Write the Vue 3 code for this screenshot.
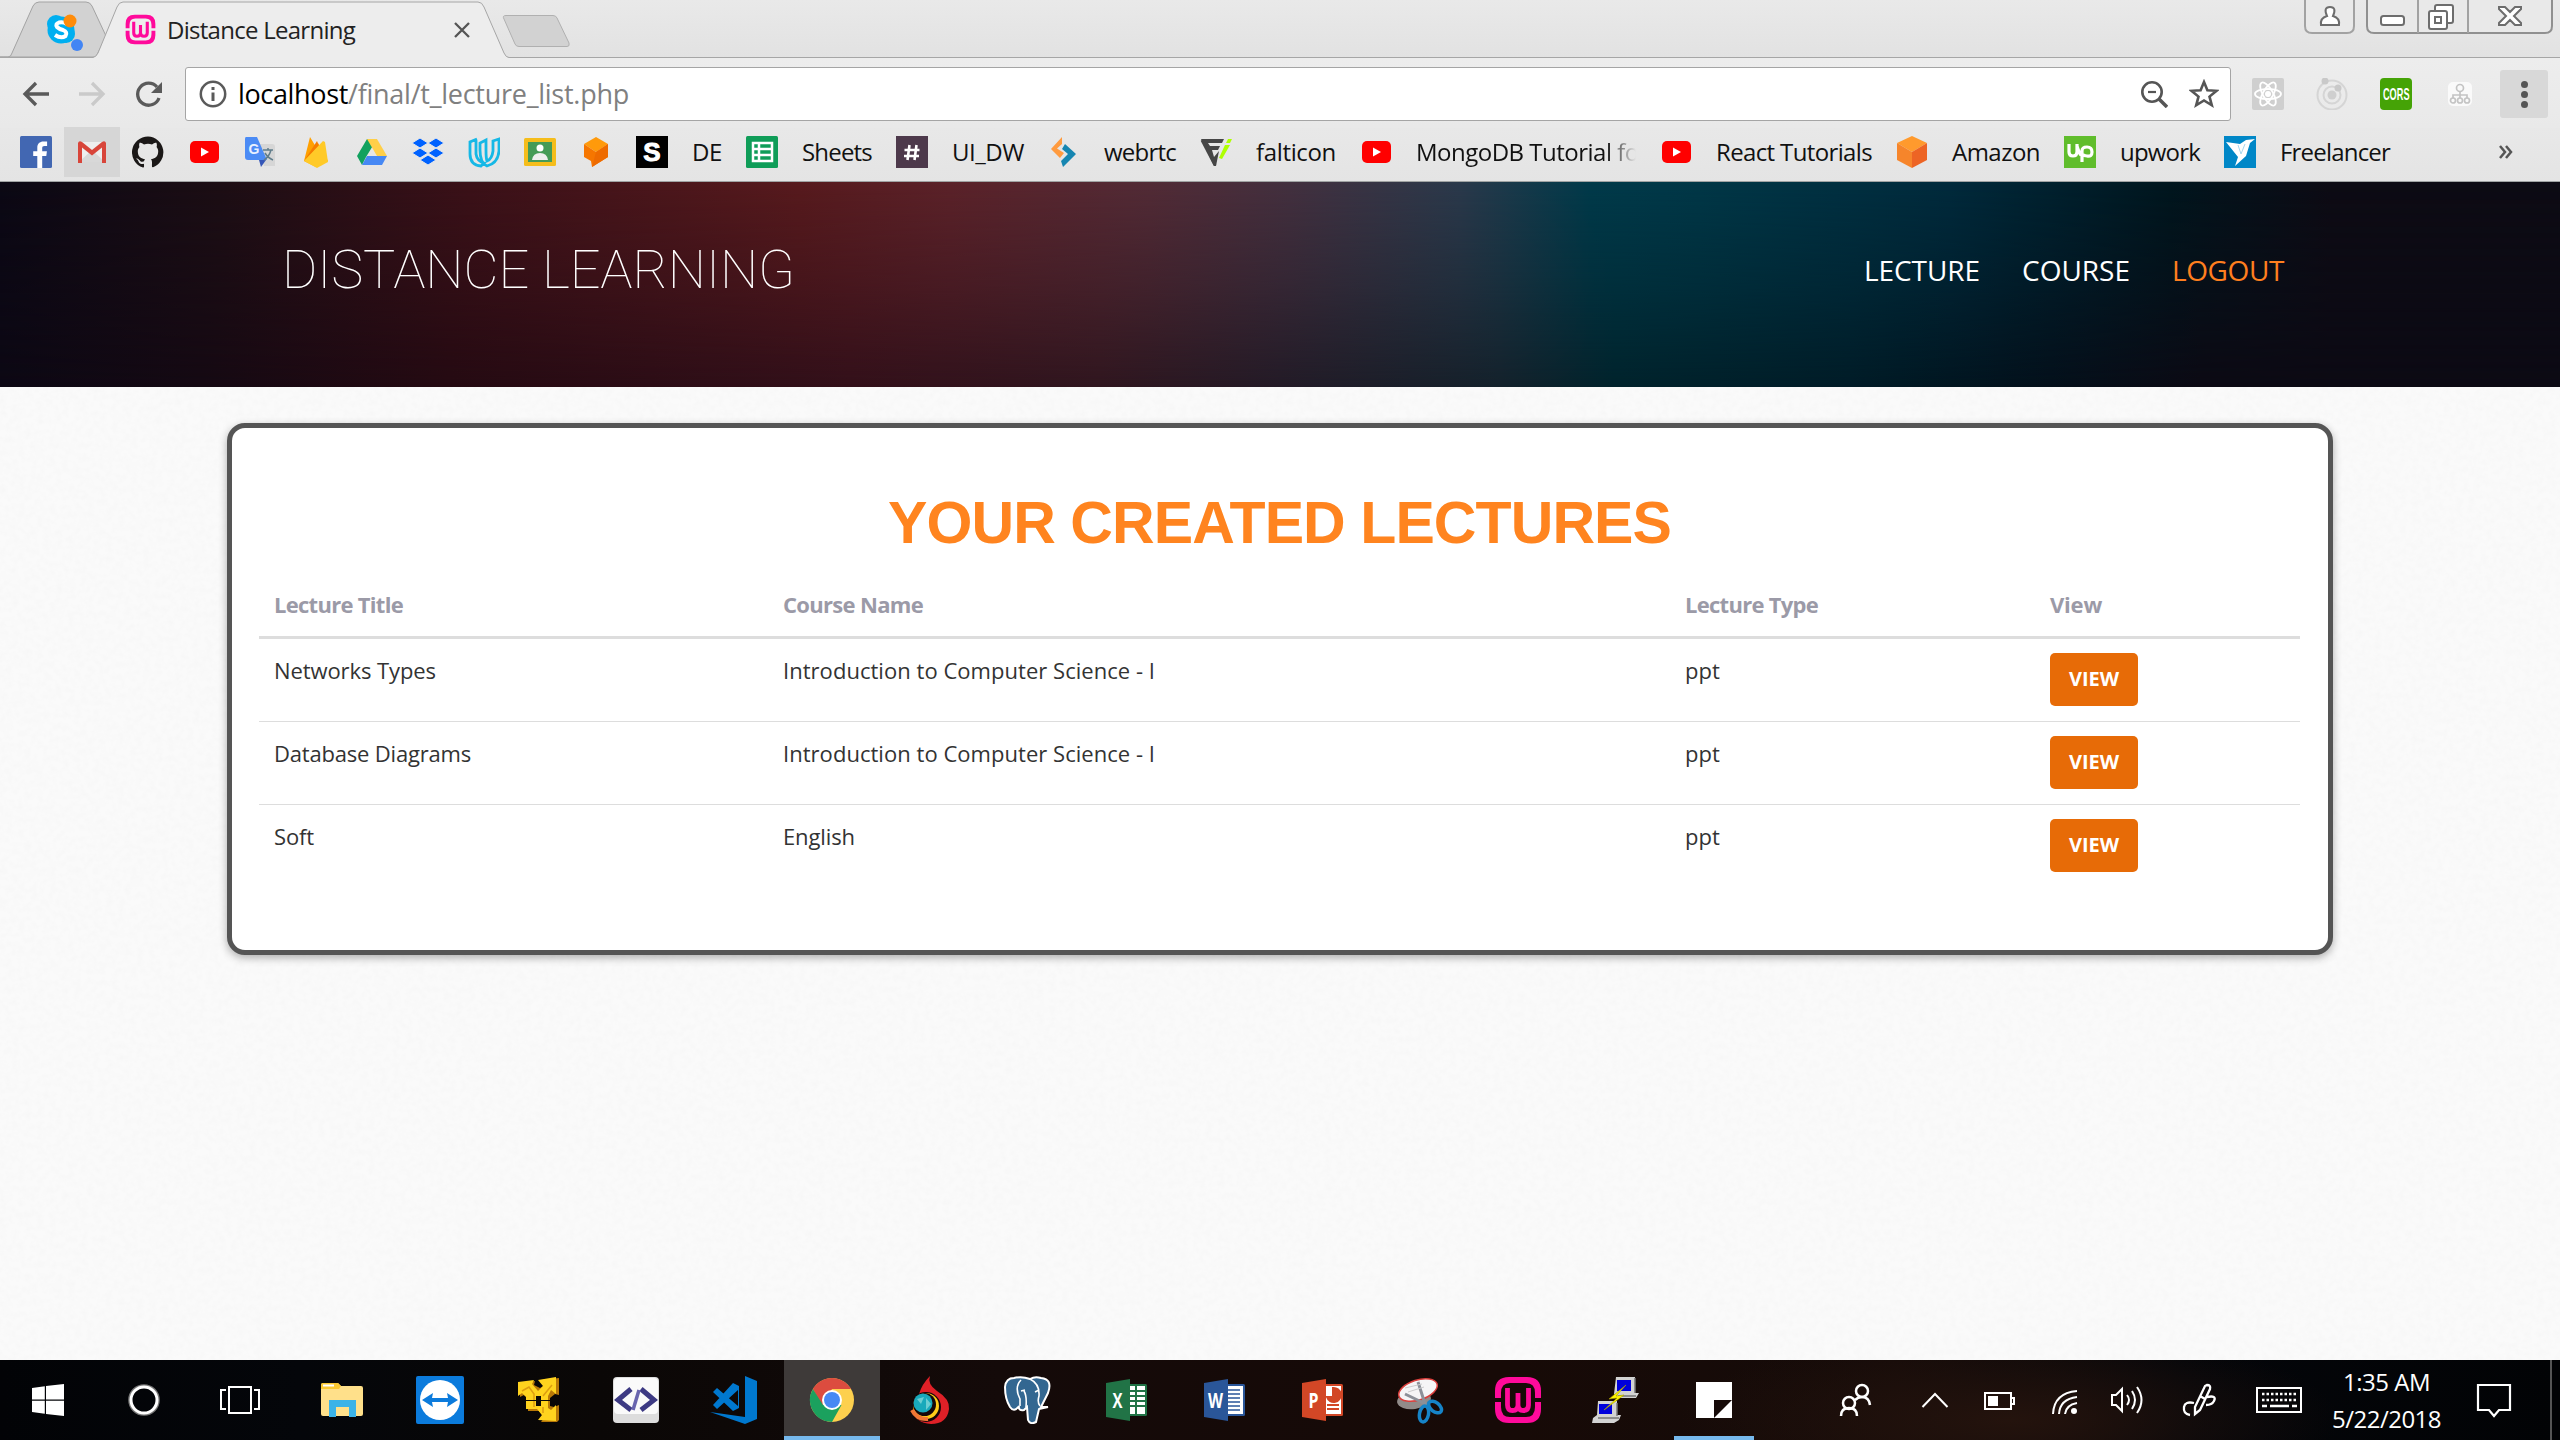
<script setup>
import { nextTick } from 'vue'

// Tracks a label so that it takes the given advance width.
const vFit = {
  mounted(el, binding) {
    nextTick(() => {
      const natural = el.getBoundingClientRect().width
      el.style.letterSpacing = (binding.value - natural) / el.textContent.length + 'px'
    })
  },
}

const youtube = '<rect x="2" y="5" width="29" height="22" rx="5" fill="#f00"/><path d="M13 11.500L21 16L13 20.500Z" fill="#fff"/>'
const wamp = '<path d="M1 22V15Q1 1 15 1H33Q47 1 47 15V22H41V17Q41 7 32 7H16Q7 7 7 17V22ZM1 26H7V31Q7 41 16 41H32Q41 41 41 31V26H47V33Q47 47 33 47H15Q1 47 1 33Z" fill="#ff0a9b"/><path d="M13.500 12V29Q13.500 34.500 18.500 34.500Q24 34.500 24 29V17M24 29Q24 34.500 29.500 34.500Q34.500 34.500 34.500 29V12" fill="none" stroke="#ff0a9b" stroke-width="4.800"/>'

const bookmarks = [
  { art: '<rect width="32" height="32" rx="1.500" fill="#4267b2"/><path d="M22.200 32V20h4.100l.6-4.800h-4.700v-3c0-1.400.4-2.300 2.400-2.300h2.500V5.600c-.4-.1-1.900-.2-3.700-.2-3.600 0-6.100 2.200-6.100 6.300v3.500h-4.100V20h4.100v12z" fill="#fff"/>' },
  { art: '<rect x="3" y="6" width="26" height="20" fill="#eee"/><path d="M3 26L16 14L29 26Z" fill="#d8d8d8"/><path d="M2 7Q3 4 6 6L16 14L26 6Q29 4 30 7V27H26V11.500L16 19.500L6 11.500V27H2Z" fill="#d8453a"/>', active: true },
  { art: '<path transform="scale(2)" d="M8 .2a8 8 0 0 0-2.530 15.590c.4.070.55-.17.55-.38l-.01-1.490c-2.230.48-2.700-1.070-2.700-1.070-.36-.92-.89-1.170-.89-1.170-.73-.5.050-.49.050-.49.800.060 1.230.83 1.230.83.720 1.220 1.870.87 2.330.66.070-.52.280-.87.510-1.070-1.780-.2-3.640-.89-3.640-3.950 0-.87.310-1.590.82-2.150-.08-.2-.36-1.020.08-2.120 0 0 .67-.21 2.200.82a7.600 7.600 0 0 1 4 0c1.530-1.040 2.200-.82 2.200-.82.440 1.100.16 1.920.08 2.120.510.56.82 1.270.82 2.150 0 3.070-1.870 3.750-3.650 3.950.29.250.54.730.54 1.480l-.01 2.200c0 .21.150.46.55.38A8 8 0 0 0 8 .2z" fill="#1b1817"/>' },
  { art: youtube },
  { art: '<path d="M12 8H28Q31 8 31 11V30H20Z" fill="#d6d6d6"/><path d="M2 1H13L23 24H4Q1 24 1 21V3Q1 1 2 1Z" fill="#4b8bf5"/><path d="M15 24H22L17 31Z" fill="#3556b8"/><text x="4.500" y="18" font-family="Liberation Sans" font-size="14" font-weight="bold" fill="#e8f0ff">G</text><path d="M19 14H29M24 12V14M27 14Q25 21 20 24M21 17Q24 22 29 24" fill="none" stroke="#607d8b" stroke-width="1.500"/>' },
  { art: '<path d="M4 25L10 1L16 11L18 7L28 25L16 31Z" fill="#ffa000"/><path d="M4 25L17 5L19 10Z" fill="#f57c00"/><path d="M4 25L23 5L25 6L28 26L17 32Z" fill="#ffca28"/>' },
  { art: '<path d="M11 3H21L10 21L6 29L1 20Z" fill="#11a15f"/><path d="M11 3H21L31 20H21Z" fill="#ffcf48"/><path d="M11 20H31L26 29H6Z" fill="#4688f4"/>' },
  { art: '<path d="M8 2L16 7L8 12L0 7ZM24 2L32 7L24 12L16 7ZM8 12L16 17L8 22L0 17ZM24 12L32 17L24 22L16 17ZM16 19L24 24L16 29L8 24Z" fill="#0062ff" stroke="#e7e7e7" stroke-width="1"/>' },
  { art: '<path d="M9 3L2 6V18Q2 29 13 30L16 27Q9 25 8 18V4M18 4L12 7V14Q12 27 19 30Q30 27 31 15V3L25 5V15Q24 23 19 25Q18 22 18 14Z" fill="none" stroke="#16b8e6" stroke-width="2.800"/>' },
  { art: '<rect y="2" width="32" height="28" rx="1.500" fill="#f5bd1b"/><rect x="4" y="6" width="24" height="20" fill="#459b57"/><circle cx="16" cy="12" r="3.500" fill="#fff"/><path d="M8 24Q9 17 16 17T24 24Z" fill="#eee"/>' },
  { art: '<path d="M16 1L28 8L16 16L4 8Z" fill="#ff9a0b"/><path d="M4 8L16 16L28 8V21L12 31L11 25L4 21Z" fill="#f67600"/><path d="M16 16L28 8V21L12 31Z" fill="#ee6b00"/>' },
  { art: '<rect width="32" height="32" fill="#000"/><text x="16" y="25" text-anchor="middle" font-family="Liberation Sans" font-size="26" font-weight="bold" fill="#fff" stroke="#fff">S</text>', label: 'DE', width: 30 },
  { art: '<rect width="32" height="32" rx="1.500" fill="#0f9d58"/><path d="M7 7H26V25H7ZM7 13H26M7 19H26M13 7V25" fill="none" stroke="#fff" stroke-width="2.500"/>', label: 'Sheets', width: 70 },
  { art: '<rect width="32" height="32" fill="#4d394b"/><path d="M13.500 9L11.500 24M20.500 9L18.500 24M8.500 14H23.500M8 20H23" stroke="#fff" stroke-width="2.600"/>', label: 'UI_DW', width: 72 },
  { art: '<path d="M14 1V8L9 12.500L16 17L12 22L3 13Z" fill="#ff9b3f"/><path d="M17 8L28 18L15 31L13 25L20 18L14 13Z" fill="#1686b1"/>', label: 'webrtc', width: 72 },
  { art: '<path d="M1 3H24L22 7H8L10 10H20L18 14H12L14 21L19 15L16 30H14Z" fill="#464646"/><path d="M2 4L15 29" stroke="#464646" stroke-width="3"/><path d="M28 3H32L30 7H26ZM25 9H30L22 23L19 22Z" fill="#aeff00"/>', label: 'falticon', width: 80 },
  { art: youtube, label: 'MongoDB Tutorial for', width: 232, clipped: true },
  { art: youtube, label: 'React Tutorials', width: 156 },
  { art: '<path d="M16 0L31 7L16 16L1 7Z" fill="#ff9a2d"/><path d="M1 7L16 16V32L1 24Z" fill="#f6852b"/><path d="M31 7L16 16V32L31 24Z" fill="#ed6424"/>', label: 'Amazon', width: 88 },
  { art: '<rect width="32" height="32" fill="#60bd2c"/><path d="M5 8V16Q5 20 9 20T13 16V8M13 10Q15 17 17 19M18 26V15Q18 11 23 11T28 16T23 20Q20 20 18 18" fill="none" stroke="#fff" stroke-width="3.200"/>', label: 'upwork', width: 80 },
  { art: '<rect width="32" height="32" fill="#0087c7"/><path d="M2 6L16 8L22 4L31 3L26 7L22 20L11 30L14 21Z" fill="#fff"/><path d="M14 9L17 18L21 8" fill="none" stroke="#a6d6ed" stroke-width="1"/>', label: 'Freelancer', width: 110 },
]

const extensions = [
  '<rect width="32" height="32" rx="2" fill="#cfcfcf"/><g fill="none" stroke="#fff" stroke-width="1.800"><ellipse cx="16" cy="16" rx="13" ry="5"/><ellipse cx="16" cy="16" rx="13" ry="5" transform="rotate(60 16 16)"/><ellipse cx="16" cy="16" rx="13" ry="5" transform="rotate(120 16 16)"/></g><circle cx="16" cy="16" r="3" fill="#fff"/>',
  '<circle cx="16" cy="17" r="14.500" fill="none" stroke="#d5d5d5" stroke-width="2"/><circle cx="16" cy="17" r="8.500" fill="none" stroke="#d5d5d5" stroke-width="2"/><circle cx="16" cy="17" r="4.500" fill="#cfcfcf"/><circle cx="9" cy="3" r="3.500" fill="#c9c9c9"/><circle cx="22" cy="10" r="3.500" fill="#c9c9c9"/>',
  '<rect width="32" height="32" rx="4" fill="#45a306"/><text transform="translate(3 21.500) scale(.68 1.200)" font-family="Liberation Sans" font-weight="bold" font-size="13.500" fill="#fff">CORS</text>',
  '<rect x="4" y="4" width="24" height="24" rx="5" fill="#fafafa"/><g fill="none" stroke="#c4c4c4" stroke-width="1.700"><circle cx="16" cy="10" r="3.500"/><path d="M16 14V20M9 20V17H23V20"/><circle cx="9" cy="22.500" r="2.500"/><circle cx="16" cy="22.500" r="2.500"/><circle cx="23" cy="22.500" r="2.500"/></g>',
]

const office = (color, letter, page) =>
  `<rect x="23" y="8" width="22" height="32" rx="1.500" fill="${color}"/>${page}<path d="M4 7L28 3V45L4 41Z" fill="${color}"/><text x="15.500" y="32" text-anchor="middle" textLength="${letter === 'W' ? 15 : 10}" lengthAdjust="spacingAndGlyphs" font-family="Open Sans" font-weight="bold" font-size="22" fill="#fff">${letter}</text>`

const system = [
  '<path d="M8 12L20.800 10.300V23.500H8ZM22 10.100L40 8V23.500H22ZM8 24.700H20.800V37.700L8 36ZM22 24.700H40V40L22 37.900Z" fill="#fff"/>',
  '<circle cx="24" cy="24" r="14.800" fill="none" stroke="#777" stroke-width="2"/><circle cx="24" cy="24" r="13" fill="none" stroke="#fff" stroke-width="3"/>',
  '<path d="M13 11H35V37H13ZM10 14H5V33H10M38 14H43V33H38" fill="none" stroke="#fff" stroke-width="2"/>',
]

const apps = [
  { art: '<path d="M3 9Q3 7 5 7H20L23 10H43Q45 10 45 12V38Q45 40 43 40H5Q3 40 3 38Z" fill="#ffe08a"/><path d="M3 9Q3 7 5 7H20L23 10L21 13H3Z" fill="#fbc933"/><path d="M5 9.500H16" stroke="#fff" stroke-width="2"/><path d="M11 41V24H38V41H31V31H18V41Z" fill="#3bb3e8"/>' },
  { art: '<rect width="48" height="48" rx="2" fill="#0b7bdc"/><circle cx="24" cy="24" r="20" fill="#fff"/><path d="M6 24L17 17L16 22H32L31 17L42 24L31 31L32 26H16L17 31Z" fill="#0b7bdc"/>' },
  { art: '<path d="M6 7L21 5L20 9L26 12L31 9L27 4L45 2V19L41 18L36 22V30L40 31L45 29V44L43 46L27 46L30 42L25 35H14V22L10 19L6 21Z" fill="#b87808"/><path d="M4 6L20 4L18 8L24 15L29 10L24 4L42 1V18L37 14L34 20V32L37 34L42 29V45L24 44L28 39L23 33H12V21L8 17L4 20Z" fill="#ffd31e"/><path d="M8 15L15 11L20 18V31M29 20L38 9M29 31V37" fill="none" stroke="#dd9d10" stroke-width="1.500"/><path d="M22 20H27V30H22Z" fill="#0a0806"/><path d="M11 24.500H43" stroke="#0a0806"/>' },
  { art: '<rect x="1" y="1" width="46" height="46" rx="4" fill="#ddd"/><rect x="2" y="2" width="44" height="36" rx="4" fill="#fafafa"/><path d="M19 13L6 24L19 34M29 13L42 24L29 34" fill="none" stroke="#3d3a83" stroke-width="5"/><path d="M27 14L21 34" stroke="#6965ae" stroke-width="3.500"/>' },
  { art: '<path d="M35 0L47 5V43L35 48L0 36L35 41Z" fill="#0078cf"/><path d="M3 16L7 12L28 30V14L7 33L3 29L23 7L29 10V32L23 35Z" fill="#0078cf"/>' },
  { art: '<circle cx="24" cy="24" r="22" fill="#fdd04e"/><path d="M4.900 13A22 22 0 0 1 43 13H24L14 30Z" fill="#dc4c3f"/><path d="M4.900 13A22 22 0 0 0 24 46L33.500 29H15Z" fill="#1ba15e"/><circle cx="24" cy="24" r="10" fill="#fff"/><circle cx="24" cy="24" r="8" fill="#4688f4"/>', active: true },
  { art: '<path d="M24 0Q21 8 31 15Q44 23 43 33Q41 48 25 48Q9 47 6 33L13 18Q16 8 24 0Z" fill="#df2027"/><circle cx="20" cy="31" r="15" fill="#160809"/><circle cx="20" cy="30" r="13" fill="#ffcc19"/><circle cx="18.500" cy="28.500" r="11.500" fill="#160809"/><circle cx="17" cy="27" r="9.500" fill="#19a9bb"/><path d="M11 23L18 21L15 28ZM20 22L25 28L20 34Z" fill="#6bced3"/><path d="M6 34Q11 44 22 43" fill="none" stroke="#f17735" stroke-width="4"/>' },
  { art: '<path d="M10 2Q2 2 1 11Q1 23 6 31Q10 37 15 30Q14 35 20 34L23 31L24 44Q26 49 32 46L35 33L44 31H37L44 17Q49 3 37 2Q31 0 26 3Q18 0 10 2Z" fill="#336791" stroke="#fff" stroke-width="2"/><path d="M17 4Q10 11 16 23L16 30M26 3Q36 8 35 20Q33 26 36 30M20 15Q23 20 22 31M17 15L21 14M31 16L35 14" fill="none" stroke="#fff" stroke-width="1.600"/>' },
  { art: office('#217346', 'X', '<rect x="27" y="10" width="16" height="28" fill="#fff"/><path d="M27 15H43M27 20H43M27 25H43M27 30H43M34 10V38" stroke="#217346" stroke-width="2"/>') },
  { art: office('#2a5699', 'W', '<rect x="27" y="10" width="16" height="28" fill="#fff"/><path d="M27 14H40M27 18H40M27 22H40M27 26H40M27 30H40M27 34H40" stroke="#2a5699" stroke-width="1.500"/>') },
  { art: office('#d24726', 'P', '<rect x="27" y="10" width="16" height="28" fill="#fff"/><path d="M35 12A7 7 0 1 1 29 21H35ZM29 29H41M29 33H41" fill="#d24726" stroke="#d24726" stroke-width="2"/>') },
  { art: '<ellipse cx="18" cy="24" rx="17" ry="9" fill="#918b89" transform="rotate(-8 18 24)"/><ellipse cx="22" cy="14" rx="20" ry="10" fill="#f5f5f6" stroke="#db3f3c" stroke-width="1.500" transform="rotate(-18 22 14)"/><path d="M22 6L30 31M9 18L34 30" stroke="#8c9098" stroke-width="3"/><path d="M9 12L26 8M12 16L28 11" stroke="#ccc"/><ellipse cx="28" cy="38" rx="4.500" ry="8" fill="none" stroke="#1684c8" stroke-width="3.500" transform="rotate(10 28 38)"/><ellipse cx="39" cy="31" rx="7.500" ry="4.500" fill="none" stroke="#1684c8" stroke-width="3.500" transform="rotate(38 39 31)"/>' },
  { art: wamp },
  { art: '<path d="M24 1H43V17H47L44 22H26L22 18Z" fill="#d3d3d3"/><path d="M25 4H39V15H25Z" fill="#0000dc"/><path d="M6 25H25V39H29L27 44L22 47H0L1 42L5 39Z" fill="#d3d3d3"/><path d="M7 28H20V38H7Z" fill="#0000dc"/><path d="M43 2V17M25 27V40M27 42H6M44 20H26" stroke="#777" stroke-width="1.500"/><path d="M34 9L17 23L25 22L12 34L32 19L24 20Z" fill="#fff600" stroke="#a69c00" stroke-width=".6"/>' },
  { art: '<path d="M6 6H42V24L24 42H6Z" fill="#fff"/><path d="M24 42V24H42V42Z" fill="#160a08"/><path d="M42 24V42H24Z" fill="#fff"/>', open: true },
]

const tray = [
  { cell: 'w80', art: '<g fill="none" stroke="#fff" stroke-width="2.500"><circle cx="18" cy="27" r="6"/><path d="M10 40Q10 32 18 32Q26 32 26 40"/><circle cx="31" cy="15" r="6"/><path d="M24 24Q27 21 31 21Q38 21 39 29"/></g>' },
  { cell: 'w80', art: '<path d="M11.500 31L24 18L36.500 31" fill="none" stroke="#fff" stroke-width="2"/>' },
  { cell: 'w50', art: '<path d="M9 17H35V33H9ZM36 22H38V28H36" fill="none" stroke="#fff" stroke-width="2"/><path d="M12 20H22V30H12Z" fill="#fff"/>' },
  { cell: 'w80', art: '<g fill="none" stroke="#fff" stroke-width="2"><path d="M12 38Q13 17 36 15M18 38Q19 23 36 21M24 38Q25 29 36 27"/></g><circle cx="33" cy="35" r="3" fill="#fff"/>' },
  { cell: 'w44', art: '<path d="M9 19H13L19 13V35L13 29H9ZM24 19Q28 24 24 29M29 15Q35 24 29 33M34 11Q43 24 34 37" fill="none" stroke="#fff" stroke-width="2"/>' },
  { cell: 'w100', art: '<path d="M32 9Q36 9 35 13L25 34L20 38V31L30 10ZM25 20L30 23M19 27Q10 25 9 31Q8 38 15 39M32 21Q42 19 39 25Q37 29 31 29" fill="none" stroke="#fff" stroke-width="2.300"/>' },
  { cell: 'w60', art: '<path d="M2 12H46V36H2Z" fill="none" stroke="#fff" stroke-width="2"/><path d="M7 18H41M7 24H41" stroke="#fff" stroke-width="2.300" stroke-dasharray="2.500 2"/><path d="M7 30H12M15 30H34M37 30H42" stroke="#fff" stroke-width="2.300"/>' },
]

const nav = [
  { label: 'LECTURE', width: 116 },
  { label: 'COURSE', width: 108 },
  { label: 'LOGOUT', width: 112, accent: true },
]

const columns = [
  { label: 'Lecture Title', width: 129 },
  { label: 'Course Name', width: 140 },
  { label: 'Lecture Type', width: 133 },
  { label: 'View', width: 52 },
]

const lectures = [
  { title: 'Networks Types', tw: 162, course: 'Introduction to Computer Science - I', cw: 372 },
  { title: 'Database Diagrams', tw: 197, course: 'Introduction to Computer Science - I', cw: 372 },
  { title: 'Soft', tw: 40, course: 'English', cw: 72 },
]
</script>

<template>
  <div class="screen">
    <div class="tabstrip">
      <svg class="tabshapes" width="600" height="58" viewBox="0 0 600 58">
        <path d="M0 57H8Q11 57 12 53L33 6Q35 2 39 2H86Q90 2 92 6L106 36L96 57Z" fill="#d2d2d2" stroke="#a3a3a3" />
        <path d="M0 57.500H93Q96 57 98 53L117 7Q119 2 123 2H478Q482 2 484 7L504 53Q506 57.500 509 57.500H600V60H0Z" fill="#ededed" stroke="#a6a6a6" />
        <path d="M506 15.500H553Q556 15.500 557 18L569 43Q570 46.500 567 46.500H519Q516 46.500 515 44L504 19Q502 15.500 506 15.500Z" fill="#d2d2d2" stroke="#b0b0b0" />
      </svg>
      <svg class="skype" width="40" height="40" viewBox="0 0 40 40">
        <circle cx="10" cy="10" r="9" fill="#00aff0" /><circle cx="20" cy="20" r="9" fill="#00aff0" />
        <circle cx="15" cy="16" r="13.500" fill="#00aff0" />
        <path d="M21 10Q17 7.500 13 8.500Q9 10 11 13Q13 15 17 16Q22 18 19.500 22Q15 25 9 21" fill="none" stroke="#fff" stroke-width="4" />
        <circle cx="24" cy="7" r="6.500" fill="#ff8c0a" /><circle cx="31" cy="31" r="6" fill="#4285f4" />
      </svg>
      <svg class="favicon" width="31" height="31" viewBox="0 0 48 48" v-html="wamp"></svg>
      <span class="tabtitle"><span v-fit="188">Distance Learning</span></span>
      <svg class="tabclose" width="16" height="16" viewBox="0 0 16 16"><path d="M1 1L15 15M15 1L1 15" stroke="#555" stroke-width="2.300" /></svg>
      <svg class="winbuttons" width="252" height="36" viewBox="0 0 252 36">
        <g fill="#e9e9e9" stroke="#a2a2a2" stroke-width="2">
          <path d="M1 -2V26Q1 33 8 33H43Q50 33 50 26V-2" /><path d="M63 -2V26Q63 33 70 33H241Q248 33 248 26V-2" stroke="#909090" /><path d="M114 0V33M164 0V33" />
        </g>
        <g fill="#fff" stroke="#6d6d6d" stroke-width="2">
          <path d="M17 25Q16 18 23 16Q19 7 26 7T29 16Q36 18 35 25Z" />
          <rect x="77" y="16" width="23" height="9" rx="2.500" />
          <rect x="131" y="5" width="18" height="18" rx="2" /><rect x="125" y="11" width="18" height="18" rx="2" /><rect x="131" y="17" width="6" height="6" />
          <path d="M195 7H201L206 12L211 7H217V9L210 16L217 23V25H211L206 20L201 25H195V23L202 16L195 9Z" />
        </g>
      </svg>
    </div>

    <div class="toolbar">
      <svg class="navicons" width="145" height="32" viewBox="0 0 145 32" fill="none" stroke-width="3.300">
        <path d="M29 16H6M16 5L5 16L16 27" stroke="#5a5a5a" />
        <path d="M59 16H82M72 5L83 16L72 27" stroke="#cacaca" />
        <path d="M137 9A11 11 0 1 0 139 20" stroke="#5a5a5a" /><path d="M142 4V15H131Z" fill="#5a5a5a" />
      </svg>
      <div class="omnibox">
        <svg width="28" height="28" viewBox="0 0 28 28"><circle cx="14" cy="14" r="12.200" fill="none" stroke="#5a5a5a" stroke-width="2.500" /><path d="M14 7V10M14 12.500V21" stroke="#5a5a5a" stroke-width="3" /></svg>
        <span class="url"><b v-fit="110">localhost</b><span v-fit="281">/final/t_lecture_list.php</span></span>
        <svg width="28" height="28" viewBox="0 0 28 28"><circle cx="12" cy="12" r="9.700" fill="none" stroke="#555" stroke-width="2.600" /><path d="M8 12H16" stroke="#555" stroke-width="2.200" /><path d="M19 19L27 27" stroke="#555" stroke-width="3.500" /></svg>
        <svg class="star" width="30" height="30" viewBox="0 0 30 30"><path d="M15 3L18.400 11.200L27.500 11.800L20.500 17.600L22.800 26.300L15 21.500L7.200 26.300L9.500 17.600L2.500 11.800L11.600 11.200Z" fill="none" stroke="#555" stroke-width="2.600" /></svg>
      </div>
      <div class="extensions">
        <svg v-for="(art, i) in extensions" :key="i" width="32" height="32" viewBox="0 0 32 32" v-html="art"></svg>
      </div>
      <div class="menu"><i></i><i></i><i></i></div>
    </div>

    <div class="bookmarks">
      <template v-for="(b, i) in bookmarks" :key="i">
        <span class="bmicon" :class="{ active: b.active }"><svg width="32" height="32" viewBox="0 0 32 32" v-html="b.art"></svg></span>
        <span v-if="b.label" class="bmlabel" :class="{ clipped: b.clipped }"><span v-fit="b.width">{{ b.label }}</span></span>
      </template>
      <svg class="more" width="16" height="16" viewBox="0 0 16 16"><path d="M2 2L7 8L2 14M8 2L13 8L8 14" fill="none" stroke="#555" stroke-width="2.500" /></svg>
    </div>

    <header class="hero">
      <div class="brand"><span v-fit="513">DISTANCE LEARNING</span></div>
      <nav>
        <a v-for="n in nav" :key="n.label" :class="{ accent: n.accent }"><span v-fit="n.width">{{ n.label }}</span></a>
      </nav>
    </header>

    <main>
      <svg class="grain" width="2560" height="973">
        <filter id="grain"><feTurbulence type="fractalNoise" baseFrequency=".16" numOctaves="3" seed="4" /><feColorMatrix values="0 0 0 0 .5  0 0 0 0 .5  0 0 0 0 .5  0 .09 0 0 -.032" /></filter>
        <rect width="2560" height="973" filter="url(#grain)" />
      </svg>
      <section class="card">
        <h1><span v-fit="783">YOUR CREATED LECTURES</span></h1>
        <div class="row head">
          <div v-for="c in columns" :key="c.label"><span v-fit="c.width">{{ c.label }}</span></div>
        </div>
        <div v-for="l in lectures" :key="l.title" class="row">
          <div><span v-fit="l.tw">{{ l.title }}</span></div>
          <div><span v-fit="l.cw">{{ l.course }}</span></div>
          <div><span v-fit="35">ppt</span></div>
          <div><button><span v-fit="50">VIEW</span></button></div>
        </div>
      </section>
    </main>

    <footer class="taskbar">
      <span v-for="(art, i) in system" :key="i" class="sys"><svg width="48" height="48" viewBox="0 0 48 48" v-html="art"></svg></span>
      <div class="apps">
        <span v-for="(a, i) in apps" :key="i" class="app" :class="{ active: a.active, open: a.open }"><svg width="48" height="48" viewBox="0 0 48 48" v-html="a.art"></svg></span>
      </div>
      <div class="tray">
        <span v-for="(t, i) in tray" :key="i" :class="t.cell"><svg width="48" height="48" viewBox="0 0 48 48" v-html="t.art"></svg></span>
        <div class="clock"><span v-fit="87">1:35 AM</span><span v-fit="109">5/22/2018</span></div>
        <span class="w58"><svg width="48" height="48" viewBox="0 0 48 48"><path d="M8 9H40V34H29L24 40L19 34H8Z" fill="none" stroke="#fff" stroke-width="2.200" /></svg></span>
      </div>
      <i class="peek"></i>
    </footer>
  </div>
</template>

<style>
body { margin: 0; overflow: hidden; }
</style>

<style scoped>
.screen { width: 2560px; height: 1440px; display: flex; flex-direction: column; font-family: "Open Sans", "Noto Sans", sans-serif; font-size: 24px; background: #fafafa; overflow: hidden; }
svg { display: block; flex: none; }
span { white-space: nowrap; }
.tabstrip { position: relative; height: 58px; flex: none; display: flex; align-items: flex-start; box-sizing: border-box; background: linear-gradient(#e9e9e9, #e2e2e2); border-bottom: 1px solid #a6a6a6; }
.tabshapes { position: absolute; left: 0; top: 0; }
.skype { position: relative; margin: 14px 0 0 46px; }
.favicon { position: relative; margin: 14px 0 0 39px; }
.tabtitle { position: relative; width: 274px; margin: 13px 0 0 11px; line-height: 34px; color: #222; }
.tabtitle span, .url > *, .bmlabel span, .brand span, nav span, h1 span, .row span { display: inline-block; }
.tabclose { position: relative; margin: 22px 0 0 13px; }
.winbuttons { margin-left: auto; margin-right: 4px; }

.toolbar { height: 70px; flex: none; display: flex; align-items: flex-start; background: linear-gradient(#ededed, #e9e9e9); }
.navicons { margin: 20px 0 0 20px; }
.omnibox { margin: 9px 0 0 20px; width: 2046px; height: 54px; box-sizing: border-box; background: #fff; border: 1.500px solid #a5a5a5; border-radius: 3px; display: flex; align-items: center; padding: 0 11px 0 13px; }
.url { flex: 1; margin-left: 11px; font-size: 27px; line-height: 50px; color: #808080; }
.url b { font-weight: 400; color: #000; }
.star { margin-left: 21px; }
.extensions { display: flex; gap: 32px; margin: 20px 0 0 21px; }
.menu { width: 48px; height: 48px; margin: 12px 0 0 24px; background: #d8d8d8; border-radius: 3px; display: flex; flex-direction: column; align-items: center; justify-content: center; gap: 3px; }
.menu i { width: 7px; height: 7px; border-radius: 50%; background: #555; }

.bookmarks { height: 54px; flex: none; box-sizing: border-box; display: flex; gap: 24px; align-items: center; padding: 0 46px 6px 20px; background: linear-gradient(#e8e8e8, #e4e4e4); border-bottom: 1.500px solid #a0a3a3; }
.bmicon.active { margin: 0 -12px; padding: 9px 12px; background: #d6d6d6; }
.bmlabel { line-height: 34px; color: #111; }
.bmlabel.clipped { width: 220px; overflow: hidden; -webkit-mask-image: linear-gradient(90deg, #000 190px, transparent 220px); mask-image: linear-gradient(90deg, #000 190px, transparent 220px); }
.more { margin-left: auto; }

.hero { position: relative; height: 205px; flex: none; box-sizing: border-box; display: flex; justify-content: space-between; padding: 0 276px 0 282px; background: linear-gradient(90deg, #0c0814 0, #150913 200px, #250a12 450px, #33101a 850px, #30161f 1100px, #231b27 1280px, #14222c 1500px, #00232c 1620px, #001c27 1850px, #04101b 2050px, #0c0a14 2200px); }
.hero::before { content: ""; position: absolute; inset: 0; background: linear-gradient(90deg, #0b0814 0, #1c0e14 220px, #3b1118 470px, #571a1d 800px, #5b2229 950px, #522b36 1150px, #43303f 1290px, #2a394b 1460px, #003a4a 1590px, #003747 1700px, #002a3c 1950px, #00161e 2170px, #0d0b14 2330px); -webkit-mask-image: linear-gradient(#000, rgba(0, 0, 0, .55) 50%, transparent); mask-image: linear-gradient(#000, rgba(0, 0, 0, .55) 50%, transparent); }
.brand { position: relative; margin-top: 52px; font: 100 54px/72px Roboto, sans-serif; color: #fff; }
nav { position: relative; display: flex; gap: 42px; margin-top: 68px; font-size: 28px; line-height: 40px; color: #fff; }
.accent { color: #ff7f1f; }

main { position: relative; flex: 1; min-height: 0; }
.grain { position: absolute; left: 0; top: 0; }
.card { position: relative; margin: 36px 227px 0; height: 532px; box-sizing: border-box; border: 5px solid #555; border-radius: 18px; background: #fff; padding: 62px 28px 0 27px; box-shadow: 0 3px 8px rgba(0, 0, 0, .3); }
h1 { margin: 0; text-align: center; font: bold 59px/66px "Liberation Sans", sans-serif; color: #ff841f; }
.row { height: 83px; box-sizing: border-box; display: grid; grid-template-columns: 509px 902px 365px 1fr; border-top: 1px solid #ddd; padding-top: 16px; font-size: 22px; line-height: 30px; color: #333; }
.row > div { padding-left: 15px; }
.row.head { border-top: 0; border-bottom: 3px solid #ddd; padding-top: 33px; font-weight: 700; color: #9b9aa7; }
.row.head + .row { border-top: 0; height: 82px; }
button { display: block; width: 88px; height: 53px; margin-top: -2px; padding: 0; border: 0; border-radius: 5px; background: #e76b07; color: #fff; font: 700 20px/51px "Open Sans", sans-serif; text-align: center; }
button span { position: relative; top: -1px; }

.taskbar { height: 80px; flex: none; display: flex; position: relative; background: radial-gradient(ellipse 330px 90px at 2010px 60px, #24130d, transparent), linear-gradient(90deg, #020306, #04060a 300px, #0a0706 600px, #140a09 1000px, #170a07 1500px, #150b09 1900px, #04060a 2180px, #020305); }
.taskbar span { display: flex; align-items: center; justify-content: center; }
.sys { width: 96px; }
.apps { display: flex; margin-left: 5px; }
.app { width: 96px; margin: 0 1px; box-sizing: border-box; position: relative; }
.app.active { background: #3e3a39; }
.app.active::after, .app.open::after { content: ""; position: absolute; bottom: 0; left: 0; right: 0; height: 4px; background: #76b9ed; }
.app.open::after { left: 8px; right: 8px; }
.tray { display: flex; margin-left: 52px; }
.w44 { width: 44px; } .w50 { width: 50px; } .w58 { width: 58px; } .w60 { width: 60px; } .w80 { width: 80px; } .w100 { width: 100px; }
.clock { width: 155px; margin-right: 1px; display: flex; flex-direction: column; align-items: center; padding-top: 3px; color: #fff; font-size: 24px; line-height: 37px; }
.peek { width: 2px; margin-left: 27px; background: #555; }
</style>
